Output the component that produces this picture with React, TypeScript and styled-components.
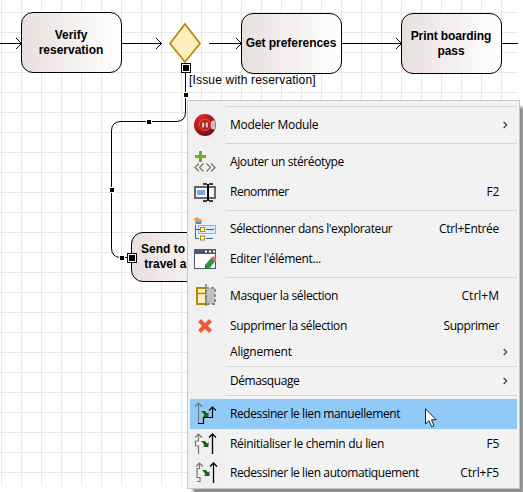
import React from "react";
import styled, { createGlobalStyle } from "styled-components";

const GlobalStyle = createGlobalStyle`
  * { box-sizing: border-box; }
  html, body { margin: 0; background: #fff; }
`;

const Editor = styled.main`
  position: relative;
  width: 523px;
  height: 492px;
  overflow: hidden;
  background: #fff;
`;

const Canvas = styled.section`
  position: relative;
  width: 518px;
  height: 486px;
  overflow: hidden;
  background-image: linear-gradient(to right, #e9e9e9 1px, transparent 1px),
    linear-gradient(to bottom, #e9e9e9 1px, transparent 1px);
  background-size: 20px 20px;
  background-position: 1px 12px;
`;

const Links = styled.svg`
  position: absolute;
  inset: 0;
`;

const Task = styled.div<{ $x: number; $y: number; $h?: number }>`
  position: absolute;
  left: ${(p) => p.$x}px;
  top: ${(p) => p.$y}px;
  width: 101px;
  height: ${(p) => p.$h ?? 61}px;
  display: flex;
  align-items: center;
  justify-content: center;
  padding-right: 1px;
  border: 1px solid #000;
  border-radius: 12px;
  background: linear-gradient(to right, #e9dfdf, #fff);
  font: bold 12px/15px "Liberation Sans", Arial, sans-serif;
  color: #000;
  text-align: center;
  white-space: pre;
`;

const TaskText = styled.span<{ $track?: number; $left?: boolean }>`
  letter-spacing: ${(p) => p.$track ?? 0}px;
  ${(p) => p.$left && "width: 100%; padding: 0 0 0 9px; text-align: left;"}
`;

const Guard = styled.span`
  position: absolute;
  left: 189px;
  top: 73px;
  font: 12px/15px "Liberation Sans", Arial, sans-serif;
  letter-spacing: 0.17px;
  white-space: nowrap;
  color: #000;
`;

const Menu = styled.div`
  position: absolute;
  left: 187px;
  top: 100px;
  width: 333px;
  height: 389px;
  padding: 2px;
  border: 1px solid #c8c8c8;
  background: linear-gradient(to right, #f0f0f0 38px, #f2f2f2 38px);
  box-shadow: 5px 6px 3px -1px rgba(0, 0, 0, 0.45);
  font: 12px/16px "Open Sans", "Noto Sans", sans-serif;
  color: #000;
`;

const Item = styled.div<{ $h: number; $active?: boolean }>`
  display: grid;
  grid-template-columns: 22px 1fr auto;
  column-gap: 14px;
  align-items: center;
  height: ${(p) => p.$h}px;
  padding: 0 18px 0 4px;
  background: ${(p) => (p.$active ? "#91c9f7" : "transparent")};
`;

const IconSlot = styled.span`
  display: flex;
  width: 22px;
  svg { overflow: visible; }
`;

const Label = styled.span<{ $track?: number }>`
  white-space: nowrap;
  letter-spacing: ${(p) => p.$track ?? 0}px;
`;

const Chevron = styled.svg`
  transform: translateX(9px);
`;

const Separator = styled.div`
  height: 1px;
  margin: 3px 0 3px 36px;
  background: #d5d5d5;
`;

const Pointer = styled.svg`
  position: absolute;
  left: 425px;
  top: 408px;
`;

const Svg = ({ children }: { children: React.ReactNode }) => (
  <svg width="22" height="24" viewBox="0 0 22 24" fill="none">{children}</svg>
);

const ModuleIcon = () => (
  <Svg>
    <defs>
      <radialGradient id="ball" cx="35%" cy="25%" r="80%">
        <stop offset="0" stopColor="#dc2a2a" />
        <stop offset="0.55" stopColor="#b81418" />
        <stop offset="1" stopColor="#6d0a0c" />
      </radialGradient>
    </defs>
    <circle cx="11" cy="12" r="11" fill="url(#ball)" />
    <path d="M17 8.500l2-1h2.500v9H19l-2-1z" fill="#c9c4c4" />
    <circle cx="11" cy="12" r="5.500" fill="#b51d20" stroke="#cf5c5c" />
    <path d="M9 9.500v5M13 9.500v5" stroke="#e5b5b5" strokeWidth="2" />
    <path d="M11 10v3" stroke="#d88" />
  </Svg>
);

const StereotypeIcon = () => (
  <Svg>
    <path d="M5 1h3v4h4v3H8v4H5V8H1V5h4z" fill="#6eae22" />
    <path d="M5 13.500L1 17.500l4 4M9.500 13.500l-4 4 4 4M12.500 13.500l4 4-4 4M17 13.500l4 4-4 4" stroke="#77706a" strokeWidth="1.2" />
  </Svg>
);

const RenameIcon = () => (
  <Svg>
    <rect x="1" y="7" width="20" height="11" fill="#f7f7f7" stroke="#666" strokeWidth="2" />
    <rect x="3" y="10" width="8" height="5" fill="#7ea3e8" />
    <path d="M14 4v17" stroke="#000" strokeWidth="2" />
    <path d="M9 4h4M15 4h4M9 21h4M15 21h4" stroke="#000" strokeWidth="1.600" />
  </Svg>
);

const ExplorerIcon = () => (
  <Svg>
    <rect x="4.500" y="8.500" width="17" height="8" fill="#d8eafc" stroke="#8eb3de" />
    <path d="M1.500 8v13.500H5M1.500 12.500H6M12 12.500h8M12 21.500h7" stroke="#286a9e" />
    <path d="M0 1h2l2-1 1 2h2l1 1-1 2H1V3H0z" fill="#f7952b" />
    <path d="M1 5h6l1-1-1 3H2z" fill="#2c8fe0" />
    <rect x="6.500" y="10.500" width="4" height="4" fill="#fff3a8" stroke="#b28a17" />
    <rect x="6.500" y="19" width="4" height="4" fill="#fff3a8" stroke="#b28a17" />
  </Svg>
);

const EditIcon = () => (
  <Svg>
    <rect x="0.500" y="2.500" width="21" height="19" fill="#fff" stroke="#4c586e" />
    <path d="M0 2h22v5H0z" fill="#4c586e" />
    <path d="M11 3.500h2v2h-2zM15 3.500h2v2h-2zM19 3.500h2v2h-2z" fill="#fff" />
    <path d="M11 18l7-8 4 3-7 9h-4z" fill="#319638" />
    <path d="M17 11l2-2 3 2v3l-1 1z" fill="#e66a70" />
    <path d="M11 18v4h3z" fill="#24722c" />
  </Svg>
);

const HideIcon = () => (
  <Svg>
    <rect x="3" y="4" width="9" height="16" fill="#fff0bd" stroke="#b78609" strokeWidth="2" />
    <path d="M3 9.500h8" stroke="#b78609" strokeWidth="1.500" />
    <rect x="12" y="4" width="9" height="16" fill="#c1c1c1" stroke="#8d8d8d" strokeWidth="2" strokeDasharray="3 2" />
    <path d="M12 0v22" stroke="#777" strokeWidth="1.500" strokeDasharray="4 2" />
    <path d="M13 9.500h8" stroke="#c1c1c1" />
  </Svg>
);

const DeleteIcon = () => (
  <Svg>
    <path d="M5.500 6.500l11 11M16.500 6.500l-11 11" stroke="#f0583b" strokeWidth="4" />
  </Svg>
);

const GreenArrow = () => (
  <path d="M7 9h4l2 2.500L14.500 10v5H8.500l2-1L9 11z" fill="#126412" />
);

const ManualIcon = () => (
  <Svg>
    <path d="M4.500 21V1M1 4.500L4.500 1 8 4.500" stroke="#777" strokeWidth="1.200" />
    <path d="M4 21.500h5.500v-6h9V5M15 8.500L18.500 5 22 8.500" stroke="#000" strokeWidth="1.200" />
    <GreenArrow />
  </Svg>
);

const ResetIcon = () => (
  <Svg>
    <path d="M4.500 22v-8h-3V9h3V2M1 5.500L4.500 2 8 5.500" stroke="#777" strokeWidth="1.200" />
    <path d="M18.500 22V2M15 5.500L18.500 2 22 5.500" stroke="#000" strokeWidth="1.300" />
    <GreenArrow />
  </Svg>
);

const AutoIcon = () => (
  <Svg>
    <path d="M3 20.500h3v-4H3V7.500h2.500V2M2 5.500L5.500 2 9 5.500" stroke="#777" strokeWidth="1.200" />
    <path d="M19.500 22V2M16 5.500L19.500 2 23 5.500" stroke="#000" strokeWidth="1.300" />
    <g transform="translate(1 0)"><GreenArrow /></g>
  </Svg>
);

type Entry = {
  label: string;
  track?: number;
  icon?: () => React.JSX.Element;
  keys?: string;
  keysTrack?: number;
  sub?: boolean;
  h?: number;
  active?: boolean;
};

const groups: Entry[][] = [
  [{ label: "Modeler Module", track: -0.3, icon: ModuleIcon, sub: true }],
  [
    { label: "Ajouter un stéréotype", track: -0.39, icon: StereotypeIcon },
    { label: "Renommer", track: -0.5, icon: RenameIcon, keys: "F2", keysTrack: -0.3 },
  ],
  [
    { label: "Sélectionner dans l'explorateur", track: -0.38, icon: ExplorerIcon, keys: "Ctrl+Entrée", keysTrack: -0.3 },
    { label: "Editer l'élément...", track: -0.33, icon: EditIcon },
  ],
  [
    { label: "Masquer la sélection", track: -0.36, icon: HideIcon, keys: "Ctrl+M" },
    { label: "Supprimer la sélection", track: -0.37, icon: DeleteIcon, keys: "Supprimer", keysTrack: -0.42 },
    { label: "Alignement", track: -0.2, sub: true, h: 22 },
  ],
  [{ label: "Démasquage", track: -0.42, sub: true, h: 22 }],
  [
    { label: "Redessiner le lien manuellement", track: -0.4, icon: ManualIcon, active: true },
    { label: "Réinitialiser le chemin du lien", track: -0.3, icon: ResetIcon, keys: "F5", keysTrack: -0.3 },
    { label: "Redessiner le lien automatiquement", track: -0.4, icon: AutoIcon, keys: "Ctrl+F5", keysTrack: -0.15, h: 28 },
  ],
];

const MenuItem = ({ entry }: { entry: Entry }) => {
  const Icon = entry.icon;
  return (
    <Item $h={entry.h ?? 30} $active={entry.active}>
      <IconSlot>{Icon && <Icon />}</IconSlot>
      <Label $track={entry.track}>{entry.label}</Label>
      {entry.keys && <Label $track={entry.keysTrack}>{entry.keys}</Label>}
      {entry.sub && (
        <Chevron width="5" height="8" viewBox="0 0 5 8" fill="none">
          <path d="M0.700 1L3.700 4 0.700 7" stroke="#444" strokeWidth="1.300" />
        </Chevron>
      )}
    </Item>
  );
};

const Handle = ({ x, y }: { x: number; y: number }) => (
  <g>
    <rect x={x} y={y} width="10" height="10" fill="#000" />
    <rect x={x + 1} y={y + 1} width="8" height="8" fill="#fff" />
    <rect x={x + 2} y={y + 2} width="6" height="6" fill="#000" />
  </g>
);

const BendPoint = ({ x, y }: { x: number; y: number }) => (
  <g>
    <rect x={x - 1} y={y - 1} width="6" height="6" fill="#fff" />
    <rect x={x} y={y} width="4" height="4" fill="#000" />
  </g>
);

export default function App() {
  return (
    <Editor>
      <GlobalStyle />
      <Canvas>
        <Task $x={21} $y={12}><TaskText>{"Verify\nreservation"}</TaskText></Task>
        <Task $x={241} $y={13}><TaskText $track={-0.05}>Get preferences</TaskText></Task>
        <Task $x={401} $y={13}><TaskText $track={-0.1}>{"Print boarding\npass"}</TaskText></Task>
        <Task $x={131} $y={232} $h={50}><TaskText $left>{"Send to\n travel a"}</TaskText></Task>
        <Links width="518" height="486" fill="none" stroke="#000">
          <path d="M0 43.500H21M122 43.500H162M209 43.500H241M342 43.500H401M502 43.500H518" shapeRendering="crispEdges" />
          <path d="M16 38L21.500 43.500 16 49M156 38l5.500 5.500L156 49M236 38l5.500 5.500L236 49M396 38l5.500 5.500L396 49" />
          <path d="M185 24L200 43.500 185 62 170 43.500z" fill="#ffefbf" stroke="#b8860b" strokeWidth="1.700" />
          <path d="M185.500 68v44q0 9.500-9.500 9.500h-55q-9.500 0-9.500 9.500v117q0 9.500 9.500 9.500h11" />
          <g stroke="none">
            <BendPoint x={184} y={93} />
            <BendPoint x={147} y={120} />
            <BendPoint x={110} y={188} />
            <BendPoint x={120} y={256} />
            <Handle x={181} y={63} />
            <Handle x={127} y={253} />
          </g>
        </Links>
        <Guard>[Issue with reservation]</Guard>
      </Canvas>
      <Menu>
        {groups.map((group, i) => (
          <React.Fragment key={i}>
            <Separator />
            {group.map((entry) => <MenuItem key={entry.label} entry={entry} />)}
          </React.Fragment>
        ))}
      </Menu>
      <Pointer width="13" height="21" viewBox="0 0 13 21">
        <path d="M0.500 0.700V16l3.500-3.300 2.600 6 2.500-1-2.600-5.900h4.700z" fill="#fff" stroke="#102040" />
      </Pointer>
    </Editor>
  );
}
